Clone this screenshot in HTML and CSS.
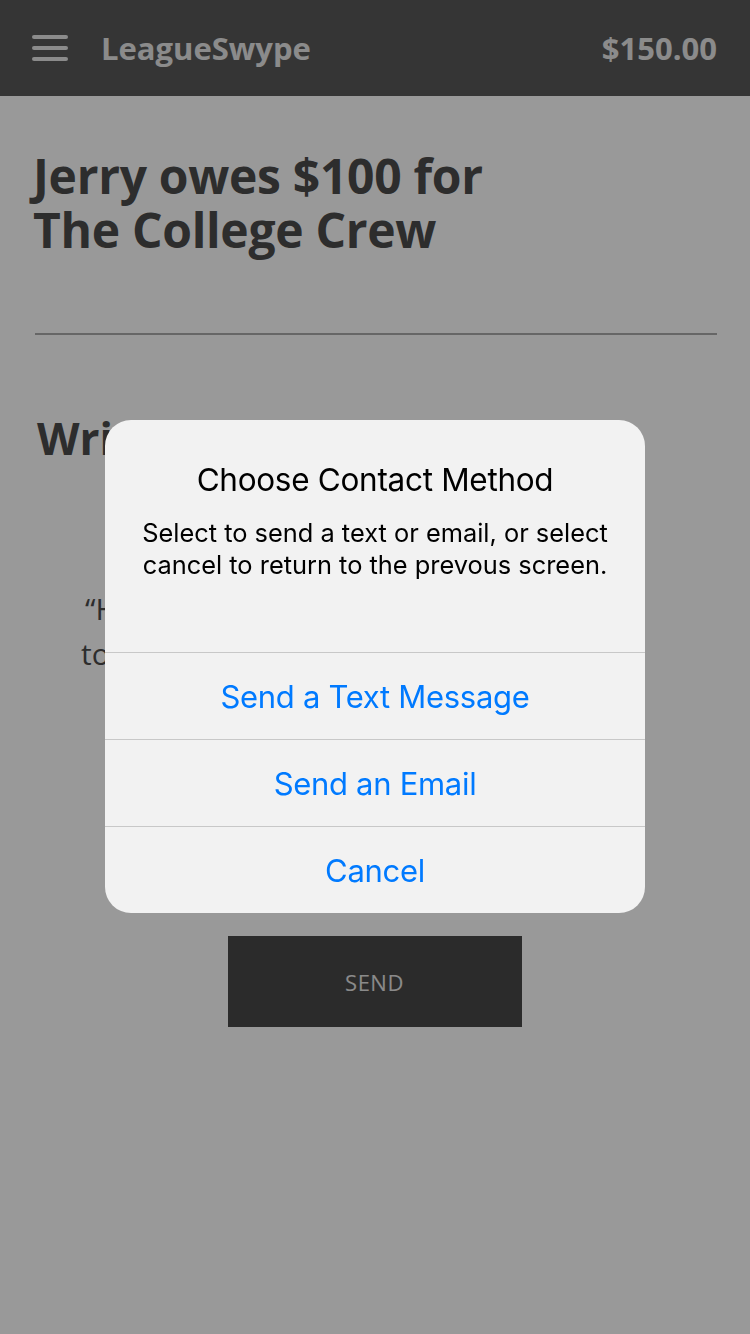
FILE: index.html
```html
<!DOCTYPE html>
<html>
<head>
<meta charset="utf-8">
<link rel="stylesheet" href="styles.css">
</head>
<body>
<header class="topbar">
  <div class="menu-icon"><span></span><span></span><span></span></div>
  <div class="brand">LeagueSwype</div>
  <div class="balance">$150.00</div>
</header>
<main class="content">
  <h1 class="title">Jerry owes $100 for<br>The College Crew</h1>
  <hr class="rule">
  <h2 class="subtitle">Write a Message</h2>
  <p class="quote"><span class="q1">“Hey Jerry, please send your $100</span><br>to The College Crew.”</p>
  <div class="send-wrap"><button class="send">SEND</button></div>
</main>
<div class="overlay">
  <div class="alert">
    <div class="alert-body">
      <div class="alert-title">Choose Contact Method</div>
      <div class="alert-msg">Select to send a text or email, or select cancel to return to the prevous screen.</div>
    </div>
    <div class="alert-btn">Send a Text Message</div>
    <div class="alert-btn">Send an Email</div>
    <div class="alert-btn">Cancel</div>
  </div>
</div>
</body>
</html>
```
FILE: styles.css
```css
html, body { margin: 0; padding: 0; }
body {
  width: 750px;
  height: 1334px;
  background: #ffffff;
  font-family: "Open Sans", "DejaVu Sans", sans-serif;
  overflow: hidden;
}
.topbar {
  height: 96px;
  background: #595959;
  display: flex;
  align-items: center;
  padding: 0 33px 0 32px;
  box-sizing: border-box;
}
.menu-icon {
  width: 36px;
  display: flex;
  flex-direction: column;
  gap: 7px;
  margin-right: 33px;
}
.menu-icon span {
  display: block;
  height: 4px;
  border-radius: 2px;
  background: #e8e8e8;
}
.brand {
  font-weight: 700;
  font-size: 31px;
  color: #e8e8e8;
  flex: 1;
}
.balance {
  font-weight: 700;
  font-size: 31px;
  color: #e8e8e8;
}
.content { padding: 0 33px 0 35px; }
.title {
  margin: 53px 0 0 -2px;
  font-size: 48px;
  line-height: 54px;
  font-weight: 700;
  color: #4c4c4c;
  letter-spacing: -0.3px;
}
.rule {
  margin: 76px 0 0 0;
  border: none;
  border-top: 2px solid #aaaaaa;
  height: 0;
}
.subtitle {
  margin: 78px 0 0 2px;
  font-size: 44px;
  line-height: 50px;
  font-weight: 700;
  color: #4c4c4c;
}
.quote {
  margin: 123px 0 0 46px;
  font-size: 30px;
  line-height: 45px;
  color: #4c4c4c;
}
.q1 { margin-left: 4px; }
.send-wrap {
  display: flex;
  justify-content: center;
  margin-top: 260px;
}
.send {
  width: 294px;
  height: 91px;
  background: #494949;
  color: #e6e6e6;
  border: none;
  font-family: "Open Sans", sans-serif;
  font-size: 22px;
  letter-spacing: 0.5px;
  margin-left: -3px;
}
.overlay {
  position: fixed;
  inset: 0;
  background: rgba(0,0,0,0.4);
  display: flex;
  align-items: center;
  justify-content: center;
}
.alert {
  width: 540px;
  background: #f2f2f2;
  border-radius: 26px;
  overflow: hidden;
  font-family: "Inter", "Roboto", sans-serif;
  text-align: center;
  margin-top: -1px;
}
.alert-body {
  height: 232px;
  box-sizing: border-box;
  padding: 40px 30px 0;
}
.alert-title {
  font-size: 31.5px;
  line-height: 40px;
  color: #000;
  letter-spacing: -0.3px;
}
.alert-msg {
  margin-top: 17px;
  font-size: 25.4px;
  line-height: 32px;
  color: #000;
}
.alert-btn {
  height: 87px;
  box-sizing: border-box;
  border-top: 1px solid #c8c8c8;
  display: flex;
  align-items: center;
  justify-content: center;
  font-size: 31px;
  color: #007aff;
  letter-spacing: -0.3px;
}
```
